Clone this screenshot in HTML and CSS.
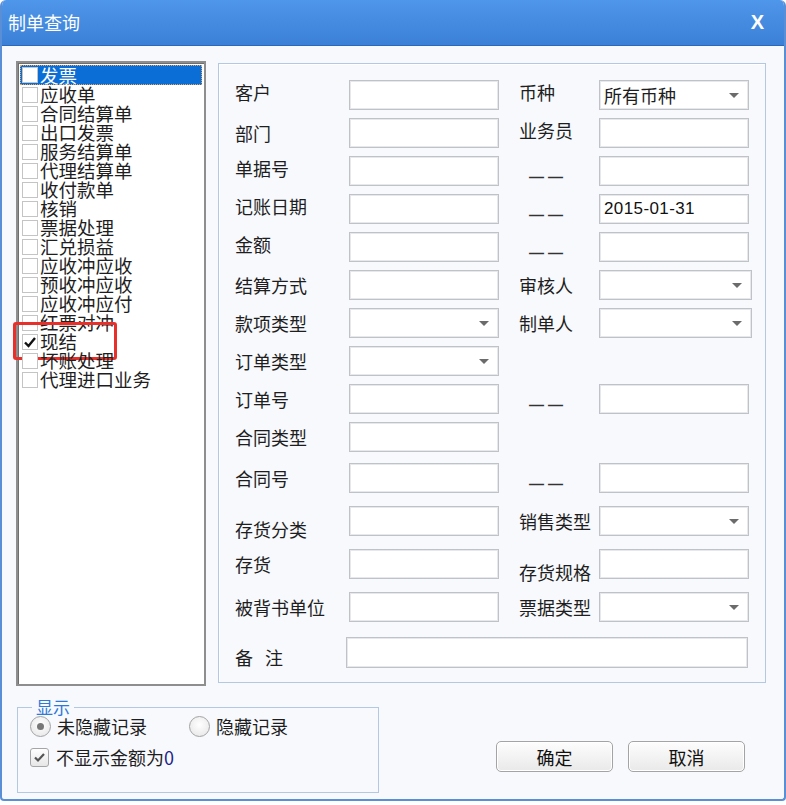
FILE: index.html
```html
<!DOCTYPE html>
<html lang="zh-CN">
<head>
    <meta charset="UTF-8">
    <meta name="viewport" content="width=device-width, initial-scale=1.0">
    <title>制单查询</title>
    <link rel="stylesheet" href="styles.css">
</head>
<body>

<div class="dialog">
    <div class="titlebar">
        <span class="title">制单查询</span>
        <span class="close">X</span>
    </div>

    <div class="content">
        <div class="main">
            <!-- lista de tipos -->
            <div class="typelist">
                <div class="item selected"><span class="cb"></span>发票</div>
                <div class="item"><span class="cb"></span>应收单</div>
                <div class="item"><span class="cb"></span>合同结算单</div>
                <div class="item"><span class="cb"></span>出口发票</div>
                <div class="item"><span class="cb"></span>服务结算单</div>
                <div class="item"><span class="cb"></span>代理结算单</div>
                <div class="item"><span class="cb"></span>收付款单</div>
                <div class="item"><span class="cb"></span>核销</div>
                <div class="item"><span class="cb"></span>票据处理</div>
                <div class="item"><span class="cb"></span>汇兑损益</div>
                <div class="item"><span class="cb"></span>应收冲应收</div>
                <div class="item"><span class="cb"></span>预收冲应收</div>
                <div class="item"><span class="cb"></span>应收冲应付</div>
                <div class="item"><span class="cb"></span>红票对冲</div>
                <div class="item marked"><span class="cb"><svg width="14" height="14" viewBox="0 0 14 14"><path d="M2 7.5 L5.5 11 L12 3" fill="none" stroke="#111" stroke-width="2.4"/></svg></span>现结</div>
                <div class="item"><span class="cb"></span>坏账处理</div>
                <div class="item"><span class="cb"></span>代理进口业务</div>
            </div>

            <!-- condiciones -->
            <div class="conds">
                <div class="row">
                    <span class="lbl up">客户</span><span class="inp"></span>
                    <span class="rlbl up">币种</span><span class="inp sel"><span>所有币种</span><i class="arrow"></i></span>
                </div>
                <div class="row">
                    <span class="lbl">部门</span><span class="inp"></span>
                    <span class="rlbl up">业务员</span><span class="inp"></span>
                </div>
                <div class="row">
                    <span class="lbl up">单据号</span><span class="inp"></span>
                    <span class="rlbl dash">——</span><span class="inp"></span>
                </div>
                <div class="row">
                    <span class="lbl up">记账日期</span><span class="inp"></span>
                    <span class="rlbl dash">——</span><span class="inp date">2015-01-31</span>
                </div>
                <div class="row">
                    <span class="lbl up">金额</span><span class="inp"></span>
                    <span class="rlbl dash">——</span><span class="inp"></span>
                </div>
                <div class="row">
                    <span class="lbl">结算方式</span><span class="inp"></span>
                    <span class="rlbl">审核人</span><span class="inp sel wide"><span></span><i class="arrow"></i></span>
                </div>
                <div class="row">
                    <span class="lbl">款项类型</span><span class="inp sel"><span></span><i class="arrow"></i></span>
                    <span class="rlbl">制单人</span><span class="inp sel wide"><span></span><i class="arrow"></i></span>
                </div>
                <div class="row">
                    <span class="lbl">订单类型</span><span class="inp sel"><span></span><i class="arrow"></i></span>
                </div>
                <div class="row">
                    <span class="lbl">订单号</span><span class="inp"></span>
                    <span class="rlbl dash">——</span><span class="inp"></span>
                </div>
                <div class="row">
                    <span class="lbl">合同类型</span><span class="inp"></span>
                </div>
                <div class="row mid">
                    <span class="lbl">合同号</span><span class="inp"></span>
                    <span class="rlbl dash">——</span><span class="inp"></span>
                </div>
                <div class="row loose">
                    <span class="lbl low">存货分类</span><span class="inp"></span>
                    <span class="rlbl">销售类型</span><span class="inp sel"><span></span><i class="arrow"></i></span>
                </div>
                <div class="row loose">
                    <span class="lbl">存货</span><span class="inp"></span>
                    <span class="rlbl low">存货规格</span><span class="inp"></span>
                </div>
                <div class="row loose">
                    <span class="lbl">被背书单位</span><span class="inp"></span>
                    <span class="rlbl">票据类型</span><span class="inp sel"><span></span><i class="arrow"></i></span>
                </div>
                <div class="row note">
                    <span class="lbl nlbl">备<span class="sp"></span>注</span><span class="inp memo"></span>
                </div>
            </div>
        </div>

        <div class="footer">
            <fieldset class="show">
                <legend>显示</legend>
                <div class="opts">
                    <label class="opt"><span class="radio on"></span>未隐藏记录</label>
                    <label class="opt second"><span class="radio"></span>隐藏记录</label>
                </div>
                <label class="opt chk"><span class="box"><svg width="13" height="13" viewBox="0 0 13 13"><path d="M2 6.5 L5 9.5 L11 3" fill="none" stroke="#555" stroke-width="2.2"/></svg></span>不显示金额为<em>0</em></label>
            </fieldset>
            <div class="buttons">
                <button class="btn">确定</button>
                <button class="btn">取消</button>
            </div>
        </div>
    </div>
</div>

</body>
</html>
```

FILE: styles.css
```css
*{margin: 0; padding: 0; box-sizing: border-box;}

body{
    background: #fff;
    font-family: "Noto Sans CJK SC", "Noto Sans", sans-serif;
    font-size: 18px;
    color: #1e1e1e;
}
.dialog{
    width: 786px;
    height: 801px;
    border: 2px solid #5a8fd6;
    border-top: none;
    border-radius: 6px 6px 4px 4px;
    background: #f7f9fd;
    overflow: hidden;
}
.titlebar{
    height: 46px;
    display: flex;
    justify-content: space-between;
    align-items: center;
    padding: 0 20px 0 6px;
    background: linear-gradient(#4f97ea, #3b80d7);
    border-bottom: 1px solid #2b67bc;
    color: #fff;
}
.title{ font-size: 18px; line-height: 20px; margin-top: -2px; }
.close{ font-family: "Liberation Sans", sans-serif; font-weight: bold; font-size: 20px; }

.content{ padding: 15px 0 0 14px; }
.main{ display: flex; gap: 12px; }

/* lista */
.typelist{
    width: 190px;
    height: 625px;
    background: #fff;
    border: 2px solid #8e8e8e;
    box-shadow: inset 1px 1px 0 #6f6f6f;
    padding: 2px 2px;
}
.item{
    position: relative;
    display: flex;
    align-items: center;
    height: 19px;
    line-height: 19px;
    padding-left: 2px;
    white-space: nowrap;
    font-size: 18.5px;
}
.item.selected{
    background: #0a6ed6;
    color: #fff;
    outline: 1px dotted #e3a45c;
    outline-offset: -1px;
    height: 20px;
}
.cb{
    width: 16px;
    height: 16px;
    margin-right: 2px;
    border: 1px solid #c4c4c4;
    background: #fff;
    display: flex;
    align-items: center;
    justify-content: center;
    flex: none;
}
.item.marked::after{
    content: "";
    position: absolute;
    left: -7px;
    top: -10px;
    width: 98px;
    height: 32px;
    border: 3px solid #e8302a;
    border-radius: 3px;
}

/* condiciones */
.conds{
    width: 548px;
    height: 620px;
    margin-top: 2px;
    border: 1px solid #b3c8e2;
    box-shadow: inset 1px 1px 0 #fff;
    padding: 16px 0 0 16px;
}
.row{
    display: flex;
    align-items: center;
    height: 30px;
}
.row + .row{ margin-top: 8px; }
.row.mid{ margin-top: 11px; }
.row.loose{ margin-top: 13px; }
.row.note{ margin-top: 15px; height: 31px; }

.lbl{ width: 114px; white-space: nowrap; }
.rlbl{ width: 80px; margin-left: 20px; white-space: nowrap; }
.up{ padding-bottom: 6px; }
.low{ padding-top: 15px; }
.dash{
    padding: 10px 0 0 10px;
    font-family: "Liberation Sans", sans-serif;
    font-size: 15px;
    letter-spacing: 4px;
    font-weight: bold;
    color: #333;
}
.nlbl{ width: 111px; padding-top: 9px; }
.sp{ display: inline-block; width: 12px; }

.inp{
    width: 150px;
    height: 30px;
    background: #fff;
    border: 1px solid #bfc3c8;
    box-shadow: inset 0 0 0 1px #e6e8eb;
    display: flex;
    align-items: center;
    padding: 0 4px;
    font-size: 18px;
}
.inp.wide{ width: 153px; }
.inp.memo{ width: 402px; height: 31px; }
.inp.date{
    font-family: "Liberation Sans", sans-serif;
    font-size: 17px;
    letter-spacing: 0.4px;
    color: #111;
}
.sel{ justify-content: space-between; padding-right: 9px; }
.arrow{
    width: 0;
    height: 0;
    border-left: 5px solid transparent;
    border-right: 5px solid transparent;
    border-top: 5px solid #6b6b6b;
}

/* pie */
.footer{
    display: flex;
    align-items: flex-start;
    margin-top: 12px;
}
.show{
    width: 362px;
    height: 95px;
    margin-left: 1px;
    border: 1px solid #b3c8e2;
    padding: 0 10px 0 12px;
}
.show legend{
    color: #2f78d8;
    font-size: 17px;
    line-height: 18px;
    padding: 0 4px;
    margin-left: 2px;
}
.opts{ display: flex; height: 24px; align-items: center; margin-top: -2px; }
.opt{ display: flex; align-items: center; }
.opt.second{ margin-left: 42px; }
.radio{
    width: 21px;
    height: 21px;
    border-radius: 50%;
    border: 1px solid #a3a3a3;
    background: radial-gradient(circle at 50% 40%, #fff, #e4e4e4);
    margin-right: 6px;
    display: flex;
    align-items: center;
    justify-content: center;
}
.radio.on::after{
    content: "";
    width: 7px;
    height: 7px;
    border-radius: 50%;
    background: #777;
}
.opt.chk{ margin-top: 6px; }
.box{
    width: 19px;
    height: 19px;
    border: 1px solid #a5a5a5;
    border-radius: 3px;
    background: linear-gradient(#fff, #e6e6e6);
    margin-right: 7px;
    display: flex;
    align-items: center;
    justify-content: center;
}
.opt em{ font-style: normal; color: #24248a; }

.buttons{
    display: flex;
    gap: 15px;
    margin: 43px 0 0 117px;
}
.btn{
    width: 117px;
    height: 31px;
    font-family: "Noto Sans CJK SC", sans-serif;
    font-size: 18px;
    color: #111;
    border: 1px solid #a4a4a4;
    border-radius: 5px;
    background: linear-gradient(#fdfdfd, #e9e9e9);
    box-shadow: inset 0 0 0 1px #fff;
}
```
